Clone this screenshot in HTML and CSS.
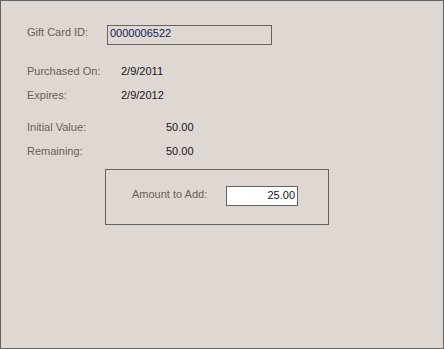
FILE: index.html
```html
<!DOCTYPE html>
<html lang="en">
<head>
  <meta charset="UTF-8">
  <title>Gift Card</title>
  <link rel="stylesheet" href="styles.css">
</head>
<body>
  <div class="form">
    <div class="id-row">
      <div class="label id-label">Gift Card ID:</div>
      <div class="id-box">0000006522</div>
    </div>

    <div class="dates">
      <div class="label">Purchased On:</div>
      <div class="value">2/9/2011</div>
      <div class="label">Expires:</div>
      <div class="value">2/9/2012</div>
    </div>

    <div class="amounts">
      <div class="label">Initial Value:</div>
      <div class="value">50.00</div>
      <div class="label">Remaining:</div>
      <div class="value">50.00</div>
    </div>

    <div class="group">
      <div class="label add-label">Amount to Add:</div>
      <div class="add-box">25.00</div>
    </div>
  </div>
</body>
</html>
```

FILE: styles.css
```css
body {
  margin: 0;
  background: #dfd8d2;
  font-family: "Liberation Sans", Arial, sans-serif;
  font-size: 11px;
  line-height: 13px;
}

.form {
  width: 444px;
  height: 349px;
  box-sizing: border-box;
  border: 1px solid #646464;
  padding: 24px 0 0 26px;
}

.label {
  color: #6b5e55;
}

.value {
  color: #151520;
}

.id-row {
  display: flex;
  height: 20px;
}

.id-label {
  width: 80px;
  padding-top: 1px;
}

.id-box {
  width: 165px;
  height: 20px;
  box-sizing: border-box;
  border: 1px solid #646464;
  padding: 1px 2px;
  color: #10205a;
}

.dates,
.amounts {
  display: grid;
  row-gap: 11px;
}

.dates {
  margin-top: 20px;
  grid-template-columns: 94px auto;
}

.amounts {
  margin-top: 19px;
  grid-template-columns: 139px auto;
}

.group {
  margin: 11px 0 0 78px;
  width: 224px;
  height: 56px;
  box-sizing: border-box;
  border: 1px solid #646464;
  display: flex;
  align-items: flex-start;
  padding: 16px 0 0 26px;
}

.add-label {
  width: 94px;
  padding-top: 2px;
}

.add-box {
  width: 72px;
  height: 20px;
  box-sizing: border-box;
  border: 1px solid #646464;
  background: #fff;
  text-align: right;
  padding: 2px 2px 0 0;
  color: #151520;
}
```
